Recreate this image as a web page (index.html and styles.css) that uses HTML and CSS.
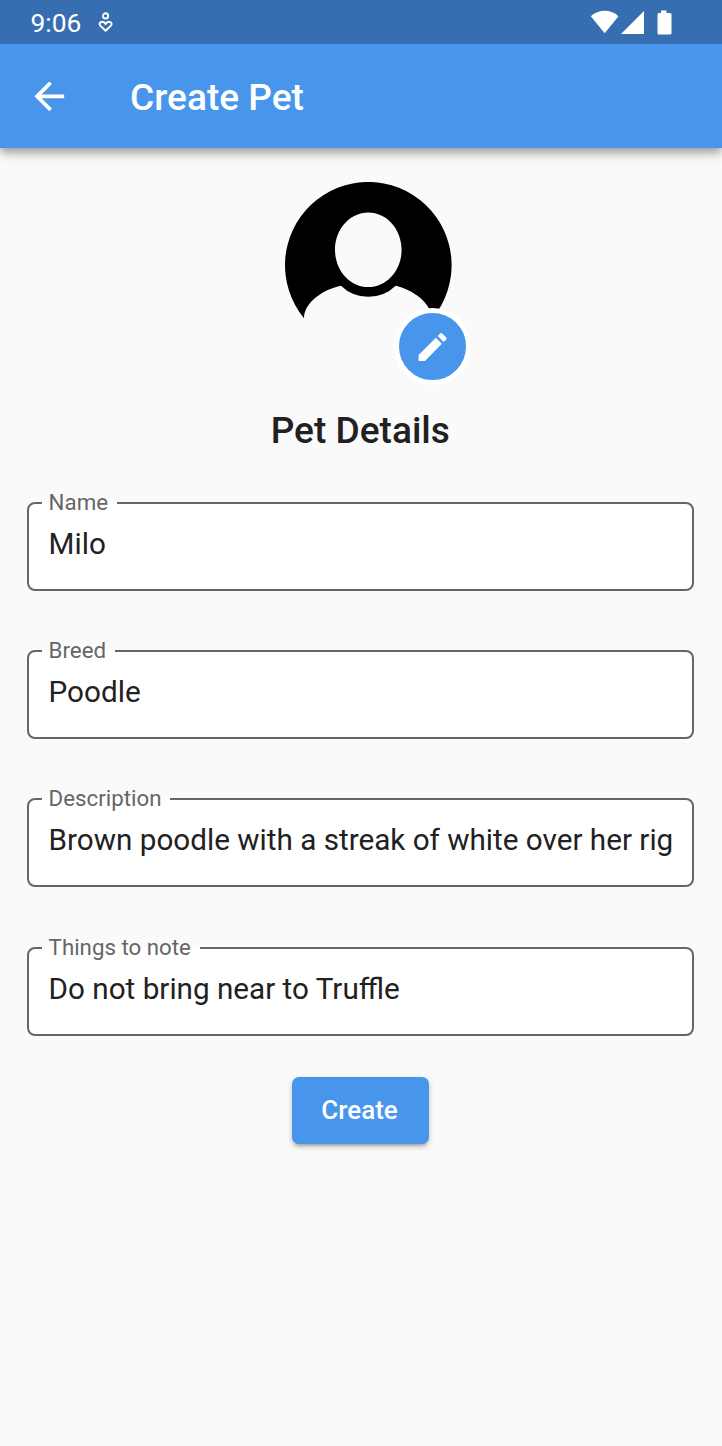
FILE: index.html
```html
<!DOCTYPE html>
<html lang="en">
<head>
<meta charset="utf-8">
<title>Create Pet</title>
<link rel="stylesheet" href="styles.css">
</head>
<body>
<div class="status-bar">
  <span class="clock">9:06</span>
  <svg class="status-note" width="16" height="22" viewBox="0 0 16 22" fill="none" stroke="#fff" stroke-width="1.9" stroke-linejoin="round">
    <circle cx="7.6" cy="3.9" r="2.6"/>
    <path d="M7.600 18.800 2.500 13.900C.6 11.900 1.900 9.700 4.300 9.700 5.900 9.700 6.900 10.700 7.600 12.100 8.300 10.700 9.300 9.700 10.900 9.700 13.300 9.700 14.600 11.900 12.700 13.900Z"/>
  </svg>
  <svg class="status-signals" width="82" height="26" viewBox="0 0 82 26" fill="#fff">
    <path d="M.8 6.300C8.500-1.100 20.900-1.100 28.500 6.300L14.700 23.300Z"/>
    <path d="M31 24 54 1V24Z"/>
    <path d="M71 .4h5.500V3H80q1.500 0 1.500 1.500V23q0 1.500-1.500 1.500H69q-1.500 0-1.500-1.500V4.500Q67.500 3 69 3h2Z"/>
  </svg>
</div>
<header class="app-bar">
  <svg class="back" viewBox="0 0 24 24" fill="#fff"><path d="M20 11H7.830l5.590-5.590L12 4l-8 8 8 8 1.410-1.410L7.830 13H20v-2z"/></svg>
  <h1 class="title">Create Pet</h1>
</header>
<main class="content">
  <div class="avatar">
    <svg class="person" width="168" height="168" viewBox="0 0 168 168">
      <path fill-rule="evenodd" d="M19.300 136.200A83.300 83.300 0 1 1 147.900 136.200C145.500 121 130 108.500 111 103.700Q99.500 114.800 83.600 114.800T56.200 103.700C35 108.500 19.300 122 19.300 136.200ZM83.600 30.500C65.200 30.500 50.300 47.200 50.300 67.800S65.200 105.100 83.600 105.100 116.900 88.400 116.900 67.800 102 30.500 83.600 30.500Z" transform="translate(-.3)"/>
      <path fill="#fafafa" d="M111 104C127 108.500 137.500 117 143 127.500L139 140H110Z"/>
    </svg>
    <div class="edit-badge">
      <svg width="37.5" height="37.5" viewBox="0 0 37.5 37.5" fill="#fff">
        <path d="M4.600 26.900 21.900 9.700 27.900 15.700 10.900 33H5.400Q4.600 33 4.600 32.200Z"/>
        <path d="M23.700 7.900 25.900 5.700Q27.200 4.400 28.500 5.700L32.100 9.300Q33.300 10.500 32.100 11.700L29.700 14Z"/>
      </svg>
    </div>
  </div>
  <h2 class="heading">Pet Details</h2>
  <form class="form">
    <fieldset class="field"><legend class="label">Name</legend><div class="value">Milo</div></fieldset>
    <fieldset class="field"><legend class="label">Breed</legend><div class="value">Poodle</div></fieldset>
    <fieldset class="field"><legend class="label">Description</legend><div class="value">Brown poodle with a streak of white over her rig</div></fieldset>
    <fieldset class="field"><legend class="label">Things to note</legend><div class="value">Do not bring near to Truffle</div></fieldset>
    <button class="create" type="button">Create</button>
  </form>
</main>
</body>
</html>
```
FILE: styles.css
```css
* { box-sizing: border-box; }

body {
  margin: 0;
  min-height: 1446px;
  background: #fafafa;
  color: #212121;
  font-family: Roboto, sans-serif;
  overflow: hidden;
}

.status-bar {
  position: relative;
  z-index: 1;
  display: flex;
  align-items: flex-start;
  height: 44px;
  padding: 0 49.600px 0 30.500px;
  background: #376eb2;
  color: #fff;
}

.clock {
  width: 67.5px;
  padding-top: 8px;
  font-size: 26.3px;
  line-height: 31px;
}

.status-note { margin-top: 12px; }

.status-signals { margin: 10px 0 0 auto; }

.app-bar {
  display: flex;
  align-items: center;
  height: 104px;
  padding-left: 26.500px;
  background: #4895ec;
  color: #fff;
  box-shadow: 0 4px 7px -1px rgba(0, 0, 0, .2), 0 7px 9px rgba(0, 0, 0, .14), 0 2px 18px rgba(0, 0, 0, .12);
}

.back {
  width: 44.6px;
  height: 44.6px;
}

.title {
  margin: 4px 0 0 59px;
  font-size: 37.1px;
  font-weight: 500;
  line-height: 44px;
}

.content {
  display: flex;
  flex-direction: column;
  align-items: center;
  padding-top: 34px;
}

.avatar {
  position: relative;
  width: 168px;
  height: 203px;
  margin-left: 16px;
}

.person { display: block; }

.edit-badge {
  position: absolute;
  left: 109px;
  top: 126px;
  display: flex;
  align-items: center;
  justify-content: center;
  width: 77px;
  height: 77px;
  border: 5px solid #fff;
  border-radius: 50%;
  background: #4895ec;
}

.heading {
  margin: 24px 1.500px 0 0;
  font-size: 37.1px;
  font-weight: 500;
  line-height: 44px;
}

.form {
  display: flex;
  flex-direction: column;
  align-items: center;
  width: 100%;
  padding: 38px 28px 0 26.600px;
}

.field {
  width: 100%;
  min-width: 0;
  height: 100px;
  margin: 0 0 48.200px;
  padding: 0 20px;
  border: 2px solid #666;
  border-radius: 8px;
  background: #fff;
}

.label {
  height: 24px;
  margin-left: -7px;
  padding: 0 9px 0 7px;
  color: #666;
  font-size: 22.300px;
  line-height: 22px;
}

.value {
  padding-top: 11px;
  font-size: 29.660px;
  line-height: 36px;
  white-space: nowrap;
}

.create {
  width: 137px;
  height: 67px;
  margin-top: -7px;
  padding: 0 1.500px 0 0;
  border: 0;
  border-radius: 7px;
  background: #4895ec;
  box-shadow: 0 4px 3px -3px rgba(0, 0, 0, .2), 0 3px 4px rgba(0, 0, 0, .14), 0 2px 7px rgba(0, 0, 0, .12);
  color: #fff;
  font: 500 26px/31px Roboto, sans-serif;
}
```
